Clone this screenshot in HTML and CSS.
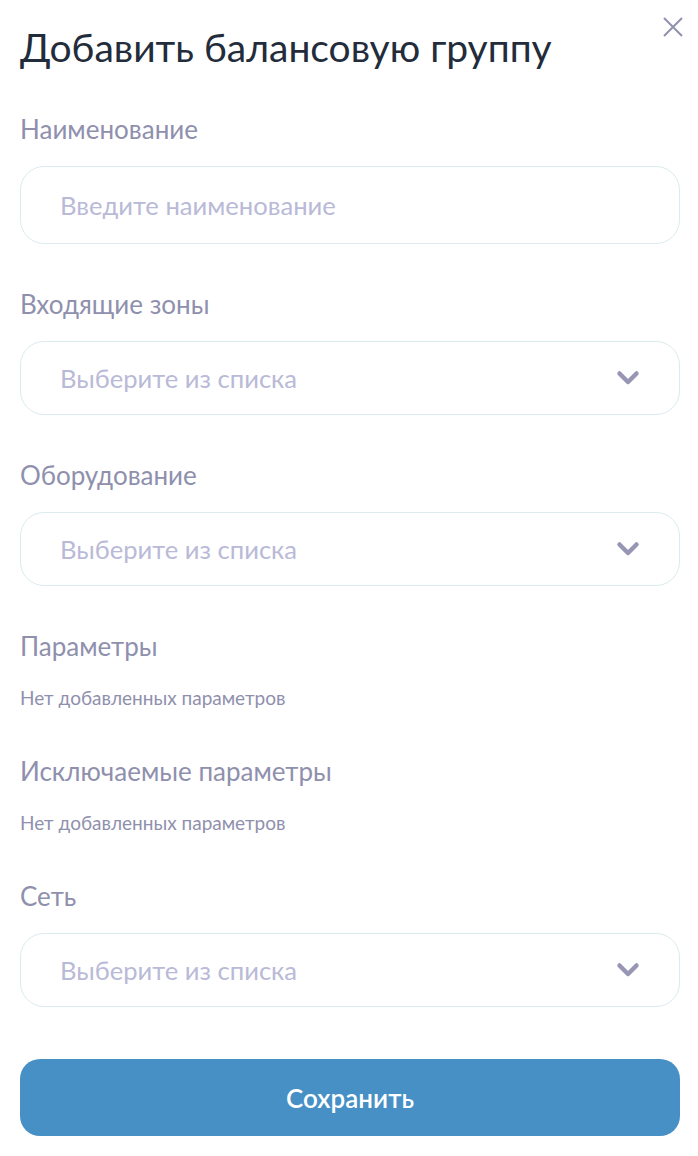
FILE: index.html
```html
<!DOCTYPE html>
<html lang="ru">
<head>
<meta charset="utf-8">
<title>Добавить балансовую группу</title>
<link rel="stylesheet" href="styles.css">
</head>
<body>
<div class="modal">
  <button class="close" aria-label="Закрыть">
    <svg width="20" height="20" viewBox="0 0 20 20"><path d="M1 1 L19 19 M19 1 L1 19" stroke="#9191ad" stroke-width="2" fill="none"/></svg>
  </button>
  <h1 class="title">Добавить балансовую группу</h1>

  <div class="field">
    <div class="label">Наименование</div>
    <div class="input input-text"><span class="placeholder">Введите наименование</span></div>
  </div>

  <div class="field">
    <div class="label">Входящие зоны</div>
    <div class="input select"><span class="placeholder">Выберите из списка</span>
      <svg class="chev" width="24" height="16" viewBox="0 0 24 16"><path d="M3.5 3.5 L12 12 L20.5 3.5" stroke="#9797b5" stroke-width="4.5" stroke-linecap="round" stroke-linejoin="round" fill="none"/></svg>
    </div>
  </div>

  <div class="field">
    <div class="label">Оборудование</div>
    <div class="input select"><span class="placeholder">Выберите из списка</span>
      <svg class="chev" width="24" height="16" viewBox="0 0 24 16"><path d="M3.5 3.5 L12 12 L20.5 3.5" stroke="#9797b5" stroke-width="4.5" stroke-linecap="round" stroke-linejoin="round" fill="none"/></svg>
    </div>
  </div>

  <div class="field field-info">
    <div class="label">Параметры</div>
    <div class="empty">Нет добавленных параметров</div>
  </div>

  <div class="field field-info">
    <div class="label">Исключаемые параметры</div>
    <div class="empty">Нет добавленных параметров</div>
  </div>

  <div class="field">
    <div class="label">Сеть</div>
    <div class="input select"><span class="placeholder">Выберите из списка</span>
      <svg class="chev" width="24" height="16" viewBox="0 0 24 16"><path d="M3.5 3.5 L12 12 L20.5 3.5" stroke="#9797b5" stroke-width="4.5" stroke-linecap="round" stroke-linejoin="round" fill="none"/></svg>
    </div>
  </div>

  <button class="save">Сохранить</button>
</div>
</body>
</html>
```

FILE: styles.css
```css
html, body {
  margin: 0;
  padding: 0;
  background: #ffffff;
}
body {
  font-family: Lato, "Noto Sans", sans-serif;
}
.modal {
  position: relative;
  padding: 25px 18px 0 20px;
  display: flex;
  flex-direction: column;
}
.close {
  position: absolute;
  top: 17px;
  right: 15px;
  width: 20px;
  height: 20px;
  padding: 0;
  border: 0;
  background: none;
  display: block;
}
.close svg { display: block; }
.title {
  margin: 0;
  font-size: 39px;
  line-height: 44px;
  font-weight: 400;
  color: #232c3b;
}
.field {
  display: flex;
  flex-direction: column;
  margin-top: 45px;
}
.label {
  font-size: 26px;
  line-height: 30px;
  color: #8f90ad;
}
.input {
  margin-top: 22px;
  height: 74px;
  box-sizing: border-box;
  border: 1px solid #dcebef;
  border-radius: 24px;
  padding: 0 39px;
  display: flex;
  align-items: center;
  justify-content: space-between;
}
.input-text {
  height: 78px;
}
.placeholder {
  font-size: 25.6px;
  color: #b9bad7;
}
.chev { display: block; }
.field-info + .field-info,
.field-info + .field {
  margin-top: 48px;
}
.empty {
  margin-top: 27px;
  font-size: 19px;
  line-height: 20px;
  color: #8f90ad;
}
.save {
  margin-top: 52px;
  height: 77px;
  border: 0;
  border-radius: 20px;
  background: #4690c6;
  color: #ffffff;
  font-family: Lato, "Noto Sans", sans-serif;
  font-size: 26px;
  font-weight: 600;
}
```
